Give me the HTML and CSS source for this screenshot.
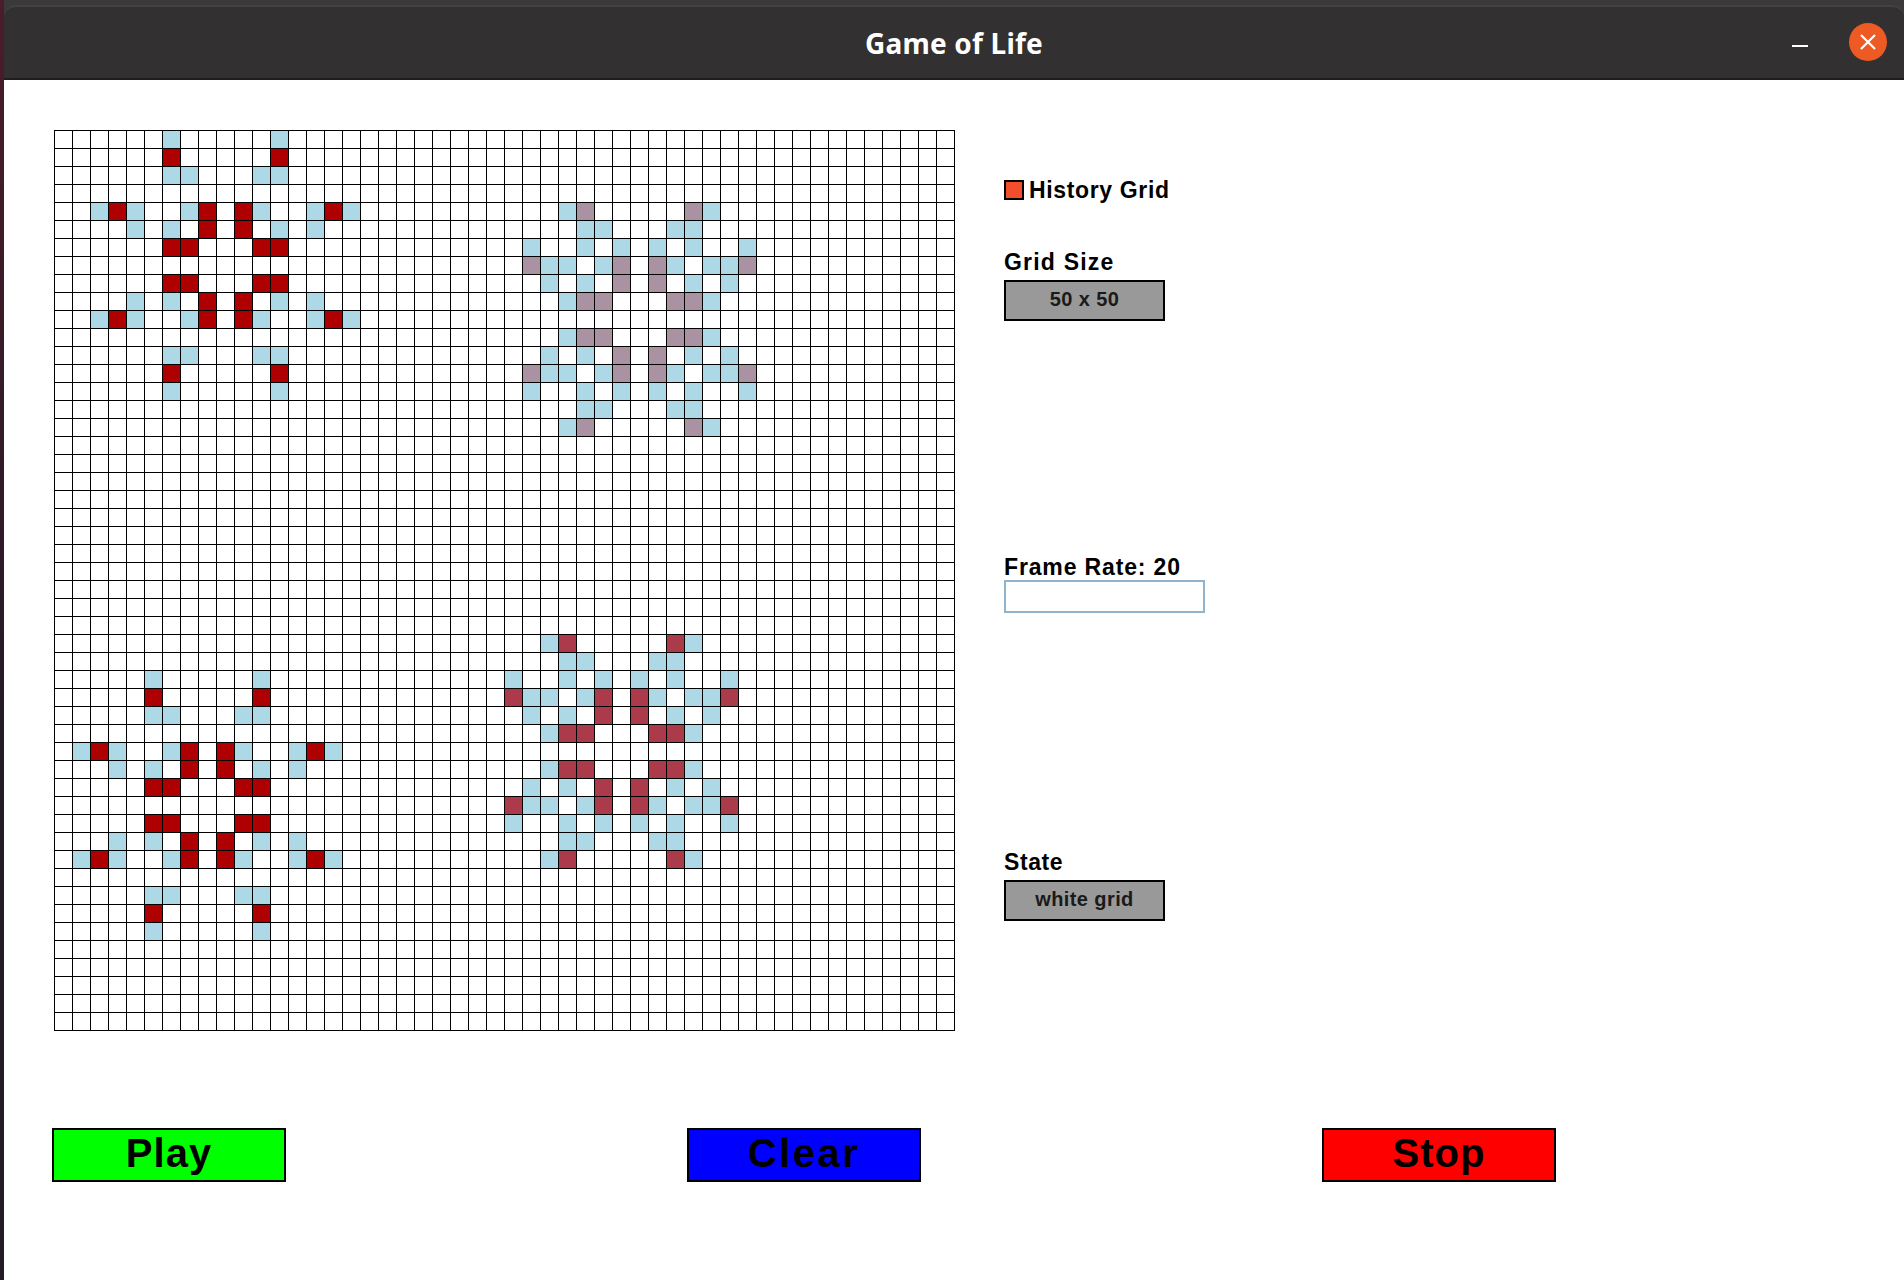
FILE: index.html
```html
<!DOCTYPE html>
<html lang="en">
<head>
  <meta charset="UTF-8">
  <meta name="viewport" content="width=device-width, initial-scale=1.0">
  <title>Game of Life</title>
  <link rel="stylesheet" href="styles.css">
</head>
<body>
  <div class="window">
    <header class="titlebar">
      <span class="title">Game of Life</span>
      <span class="min-btn"></span>
      <span class="close-btn">
        <svg width="38" height="38" viewBox="0 0 38 38">
          <path d="M12 12 L26 26 M26 12 L12 26" stroke="#fff" stroke-width="2.2" fill="none"/>
        </svg>
      </span>
    </header>

    <main class="content">
      <div class="top-row">
        <div id="grid" class="grid"></div>

        <div class="controls">
          <label class="history">
            <span class="check"></span>
            <span>History Grid</span>
          </label>
          <div class="label size-label">Grid Size</div>
          <div class="select">50 x 50</div>
          <div class="label rate-label">Frame Rate: 20</div>
          <input class="rate-input" type="text">
          <div class="label state-label">State</div>
          <div class="select">white grid</div>
        </div>
      </div>

      <div class="buttons">
        <button class="btn btn-play">Play</button>
        <button class="btn btn-clear">Clear</button>
        <button class="btn btn-stop">Stop</button>
      </div>
    </main>
  </div>

  <script src="game.js"></script>
</body>
</html>
```

FILE: styles.css
```css
* {
  box-sizing: border-box;
}
body {
  margin: 0;
  height: 1280px;
  overflow: hidden;
  background: linear-gradient(#4a1c2c, #221a24 60%);
  font-family: "Liberation Sans", Arial, sans-serif;
  color: #000;
}
.window {
  margin-left: 4px;
  height: 1280px;
  background: #3a3a3a;
  padding-top: 5px;
  display: flex;
  flex-direction: column;
}
.titlebar {
  position: relative;
  height: 75px;
  flex: none;
  display: flex;
  align-items: center;
  justify-content: center;
  background: #323030;
  border-top: 2px solid #434141;
  border-bottom: 2px solid #1f1d1d;
  border-radius: 12px 12px 0 0;
}
.title {
  color: #fff;
  font-family: "Noto Sans", sans-serif;
  font-size: 28px;
  font-weight: 700;
  letter-spacing: 0.2px;
}
.min-btn {
  position: absolute;
  left: 1788px;
  top: 38px;
  width: 16px;
  height: 2px;
  background: #fff;
}
.close-btn {
  position: absolute;
  left: 1845px;
  top: 16px;
  width: 38px;
  height: 38px;
  border-radius: 50%;
  background: #ed5a24;
}
.close-btn svg {
  display: block;
}
.content {
  flex: 1;
  background: #fff;
  padding: 50px 0 0 48px;
}
.top-row {
  display: flex;
  margin-left: 2px;
}
.grid {
  display: grid;
  grid-template-columns: repeat(50, 17px);
  grid-auto-rows: 17px;
  gap: 1px;
  padding: 1px;
  background: #000;
  flex: none;
}
.cell {
  background: #fff;
}
.cell.blue {
  background: #add8e6;
}
.cell.red {
  background: #ae0000;
}
.cell.mauve {
  background: #ab92a2;
}
.cell.crimson {
  background: #ab3a4a;
}
.controls {
  margin-left: 49px;
  display: flex;
  flex-direction: column;
  align-items: flex-start;
  padding-top: 50px;
}
.history {
  display: flex;
  align-items: center;
  gap: 5px;
  height: 20px;
  font-size: 23px;
  font-weight: bold;
  letter-spacing: 0.65px;
}
.check {
  width: 20px;
  height: 20px;
  border: 2px solid #000;
  background: #f04e2c;
}
.label {
  font-size: 23px;
  font-weight: bold;
  letter-spacing: 1.2px;
  line-height: 26px;
}
.size-label {
  margin-top: 49px;
  margin-bottom: 5px;
}
.rate-label {
  margin-top: 233px;
  margin-bottom: 0;
  letter-spacing: 0.85px;
}
.state-label {
  margin-top: 236px;
  margin-bottom: 5px;
  letter-spacing: 0.6px;
}
.select {
  width: 161px;
  height: 41px;
  padding-bottom: 2px;
  display: flex;
  align-items: center;
  justify-content: center;
  background: #999;
  border: 2px solid #000;
  color: #1a1a1a;
  font-size: 20px;
  font-weight: bold;
  letter-spacing: 0.4px;
}
.rate-input {
  width: 201px;
  height: 33px;
  margin: 0;
  padding: 0;
  background: #fff;
  border: 2px solid #8fb4cc;
  outline: none;
}
.buttons {
  display: flex;
  gap: 401px;
  margin-top: 97px;
}
.btn {
  width: 234px;
  height: 54px;
  padding: 0 0 4px;
  border: 2px solid #000;
  color: #000;
  font-family: "Liberation Sans", Arial, sans-serif;
  font-size: 40px;
  font-weight: bold;
  letter-spacing: 1px;
}
.btn-play {
  background: #0f0;
}
.btn-clear {
  background: #00f;
  letter-spacing: 2.5px;
}
.btn-stop {
  background: #f00;
}
```

FILE: game.js
```js
// one star, rows of [column, kind]: b = plain, x = the coloured cell
const star = [
  [[6, 'b'], [12, 'b']],
  [[6, 'x'], [12, 'x']],
  [[6, 'b'], [7, 'b'], [11, 'b'], [12, 'b']],
  [],
  [[2, 'b'], [3, 'x'], [4, 'b'], [7, 'b'], [8, 'x'], [10, 'x'], [11, 'b'], [14, 'b'], [15, 'x'], [16, 'b']],
  [[4, 'b'], [6, 'b'], [8, 'x'], [10, 'x'], [12, 'b'], [14, 'b']],
  [[6, 'x'], [7, 'x'], [11, 'x'], [12, 'x']],
  [],
  [[6, 'x'], [7, 'x'], [11, 'x'], [12, 'x']],
  [[4, 'b'], [6, 'b'], [8, 'x'], [10, 'x'], [12, 'b'], [14, 'b']],
  [[2, 'b'], [3, 'x'], [4, 'b'], [7, 'b'], [8, 'x'], [10, 'x'], [11, 'b'], [14, 'b'], [15, 'x'], [16, 'b']],
  [],
  [[6, 'b'], [7, 'b'], [11, 'b'], [12, 'b']],
  [[6, 'x'], [12, 'x']],
  [[6, 'b'], [12, 'b']]
];

// same shape lying on its side
const flower = [
  [[28, 'b'], [29, 'x'], [35, 'x'], [36, 'b']],
  [[29, 'b'], [30, 'b'], [34, 'b'], [35, 'b']],
  [[26, 'b'], [29, 'b'], [31, 'b'], [33, 'b'], [35, 'b'], [38, 'b']],
  [[26, 'x'], [27, 'b'], [28, 'b'], [30, 'b'], [31, 'x'], [33, 'x'], [34, 'b'], [36, 'b'], [37, 'b'], [38, 'x']],
  [[27, 'b'], [29, 'b'], [31, 'x'], [33, 'x'], [35, 'b'], [37, 'b']],
  [[28, 'b'], [29, 'x'], [30, 'x'], [34, 'x'], [35, 'x'], [36, 'b']],
  [],
  [[28, 'b'], [29, 'x'], [30, 'x'], [34, 'x'], [35, 'x'], [36, 'b']],
  [[27, 'b'], [29, 'b'], [31, 'x'], [33, 'x'], [35, 'b'], [37, 'b']],
  [[26, 'x'], [27, 'b'], [28, 'b'], [30, 'b'], [31, 'x'], [33, 'x'], [34, 'b'], [36, 'b'], [37, 'b'], [38, 'x']],
  [[26, 'b'], [29, 'b'], [31, 'b'], [33, 'b'], [35, 'b'], [38, 'b']],
  [[29, 'b'], [30, 'b'], [34, 'b'], [35, 'b']],
  [[28, 'b'], [29, 'x'], [35, 'x'], [36, 'b']]
];

const grid = document.getElementById('grid');
const cells = [];

for (let i = 0; i < 2500; i++) {
  const cell = document.createElement('div');
  cell.className = 'cell';
  grid.appendChild(cell);
  cells.push(cell);
}

function place(shape, rowOffset, colOffset, colour) {
  shape.forEach(function (row, r) {
    row.forEach(function (item) {
      const index = (r + rowOffset) * 50 + item[0] + colOffset;
      cells[index].classList.add(item[1] === 'x' ? colour : 'blue');
    });
  });
}

place(star, 0, 0, 'red');
place(star, 30, -1, 'red');
place(flower, 4, 0, 'mauve');
place(flower, 28, -1, 'crimson');
```
